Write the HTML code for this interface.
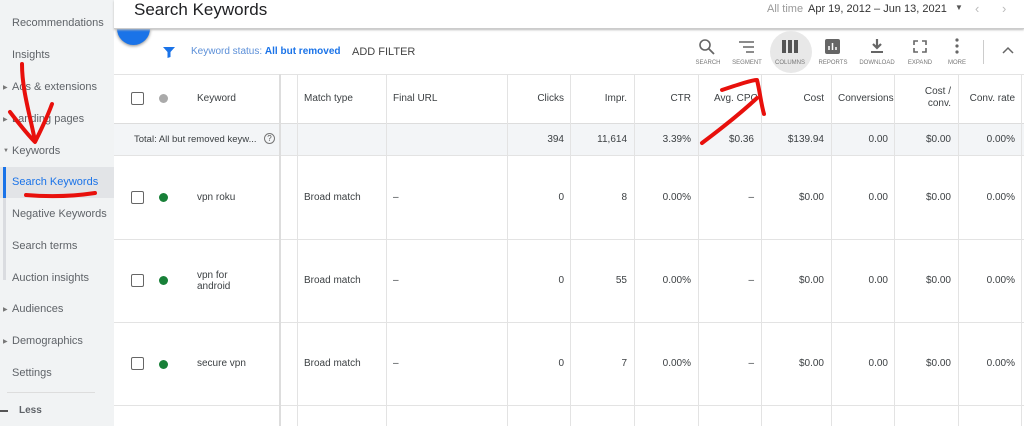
<!DOCTYPE html>
<html><head><style>
*{margin:0;padding:0;box-sizing:border-box}
body{width:1024px;height:426px;overflow:hidden;font-family:"Liberation Sans",sans-serif;background:#fff;position:relative;color:#3c4043}
.sb{position:absolute;left:0;top:0;width:114px;height:426px;background:#f1f3f4}
.sb div{position:absolute;left:12px;font-size:11px;color:#5f6368}
.tri{position:absolute;left:3px;font-size:6px;color:#777}
.hdr{position:absolute;left:114px;top:0;width:910px;height:29px;background:#fff;border-bottom:1px solid #ccc;box-shadow:0 1px 2px #bbb}
.a{position:absolute;white-space:nowrap}
.v{position:absolute;top:74px;bottom:0;width:1px;background:#e3e3e3}
.h{position:absolute;left:114px;right:0;height:1px;background:#e3e3e3}
.c{position:absolute;font-size:10px;color:#3c4043;white-space:nowrap}
.r{text-align:right}
.cb{position:absolute;left:131px;width:13px;height:13px;border:1.5px solid #666;border-radius:2px}
.dot{position:absolute;left:159px;width:9px;height:9px;border-radius:50%;background:#188038}
.ic{position:absolute;top:38px;font-size:6px;color:#777;text-align:center;width:40px}
</style></head><body>
<div class="sb">
<div style="top:17px">Recommendations</div>
<div style="top:49px">Insights</div>
<span class="tri" style="top:84px">▶</span><div style="top:81px">Ads &amp; extensions</div>
<span class="tri" style="top:116px">▶</span><div style="top:113px">Landing pages</div>
<span class="tri" style="top:148px">▼</span><div style="top:145px">Keywords</div>
<span style="position:absolute;left:0;top:167px;width:114px;height:31px;background:#e2e4e7"></span>
<span style="position:absolute;left:3px;top:167px;width:3px;height:31px;background:#1a73e8"></span>
<div style="top:176px;color:#1a73e8">Search Keywords</div>
<span style="position:absolute;left:3px;top:198px;width:3px;height:82px;background:#dadce0"></span>
<div style="top:208px">Negative Keywords</div>
<div style="top:240px">Search terms</div>
<div style="top:272px">Auction insights</div>
<span class="tri" style="top:306px">▶</span><div style="top:303px">Audiences</div>
<span class="tri" style="top:338px">▶</span><div style="top:335px">Demographics</div>
<div style="top:367px">Settings</div>
<span style="position:absolute;left:7px;top:392px;width:88px;height:1px;background:#ddd"></span>
<span style="position:absolute;left:0;top:410px;width:8px;height:1.5px;background:#555"></span>
<div style="top:405px;left:19px;font-weight:bold;font-size:10px">Less</div>
</div>
<div style="position:absolute;left:117px;top:12px;width:33px;height:33px;border-radius:50%;background:#1a73e8;box-shadow:0 1px 3px #888"></div>
<div class="hdr"></div>
<div class="a" style="left:134px;top:0px;font-size:17px;color:#202124">Search Keywords</div>
<div class="a" style="left:767px;top:3px;font-size:11px;color:#999">All time</div>
<div class="a" style="left:808px;top:3px;font-size:11px;color:#333">Apr 19, 2012 – Jun 13, 2021</div>
<div class="a" style="left:955px;top:3px;font-size:8px;color:#555">▼</div>
<div class="a" style="left:975px;top:1px;font-size:13px;color:#bbb">‹</div>
<div class="a" style="left:1002px;top:1px;font-size:13px;color:#bbb">›</div>
<svg class="a" style="left:162px;top:45px" width="14" height="14"><path d="M1 2h12L8.5 7v5l-3 1V7z" fill="#1a73e8"/></svg>
<div class="a" style="left:191px;top:46px;font-size:10px;color:#5b8fd8">Keyword status: <b style="color:#1a73e8">All but removed</b></div>
<div class="a" style="left:352px;top:46px;font-size:11px;color:#444">ADD FILTER</div>
<div style="position:absolute;left:770px;top:31px;width:42px;height:42px;border-radius:50%;background:#e8e8e8"></div>
<svg class="a" style="left:698px;top:38px" width="18" height="18"><circle cx="7" cy="7" r="5" fill="none" stroke="#666" stroke-width="1.6"/><path d="M11 11l5 5" stroke="#666" stroke-width="1.8"/></svg>
<svg class="a" style="left:738px;top:40px" width="18" height="14"><path d="M1 2h15M5 7h11M8 12h8" stroke="#666" stroke-width="1.5"/></svg>
<svg class="a" style="left:782px;top:40px" width="16" height="13"><rect x="0" y="0" width="4" height="13" fill="#555"/><rect x="6" y="0" width="4" height="13" fill="#555"/><rect x="12" y="0" width="4" height="13" fill="#555"/></svg>
<svg class="a" style="left:825px;top:39px" width="15" height="15"><rect width="15" height="15" rx="2" fill="#666"/><path d="M4 11V7M7.5 11V4M11 11V8" stroke="#fff" stroke-width="1.5"/></svg>
<svg class="a" style="left:870px;top:38px" width="14" height="16"><path d="M7 1v9M3 6l4 4 4-4" stroke="#666" stroke-width="2.2" fill="none"/><path d="M1 14h12" stroke="#666" stroke-width="2"/></svg>
<svg class="a" style="left:913px;top:40px" width="14" height="13"><path d="M1 5V1h4M9 1h4v4M13 8v4H9M5 12H1V8" stroke="#666" stroke-width="1.6" fill="none"/></svg>
<svg class="a" style="left:955px;top:38px" width="4" height="16"><circle cx="2" cy="2" r="1.6" fill="#666"/><circle cx="2" cy="8" r="1.6" fill="#666"/><circle cx="2" cy="14" r="1.6" fill="#666"/></svg>
<div class="ic" style="left:688px;top:60px">SEARCH</div>
<div class="ic" style="left:727px;top:60px">SEGMENT</div>
<div class="ic" style="left:770px;top:60px">COLUMNS</div>
<div class="ic" style="left:813px;top:60px">REPORTS</div>
<div class="ic" style="left:857px;top:60px">DOWNLOAD</div>
<div class="ic" style="left:900px;top:60px">EXPAND</div>
<div class="ic" style="left:937px;top:60px">MORE</div>
<div style="position:absolute;left:983px;top:40px;width:1px;height:24px;background:#ccc"></div>
<svg class="a" style="left:1002px;top:46px" width="12" height="8"><path d="M1 7l5-5 5 5" stroke="#666" stroke-width="1.5" fill="none"/></svg>
<div class="h" style="top:74px"></div>
<div style="position:absolute;left:114px;right:0;top:123px;height:33px;background:#f3f5f7;border-top:1px solid #ddd;border-bottom:1px solid #e3e3e3"></div>
<div class="h" style="top:239px"></div><div class="h" style="top:322px"></div><div class="h" style="top:405px"></div>
<div class="v" style="left:279px;width:2px;background:#ddd"></div>
<div class="v" style="left:297px"></div><div class="v" style="left:386px"></div><div class="v" style="left:507px"></div>
<div class="v" style="left:570px"></div><div class="v" style="left:634px"></div><div class="v" style="left:698px"></div>
<div class="v" style="left:761px"></div><div class="v" style="left:831px"></div><div class="v" style="left:894px"></div>
<div class="v" style="left:958px"></div><div class="v" style="left:1021px"></div>
<div class="cb" style="top:92px"></div><div class="dot" style="top:94px;background:#aaa"></div>
<div class="c" style="left:197px;top:93px">Keyword</div>
<div class="c" style="left:304px;top:93px">Match type</div>
<div class="c" style="left:393px;top:93px">Final URL</div>
<div class="c r" style="left:507px;width:57px;top:93px">Clicks</div>
<div class="c r" style="left:570px;width:57px;top:93px">Impr.</div>
<div class="c r" style="left:634px;width:57px;top:93px">CTR</div>
<div class="c" style="left:714px;top:93px">Avg. CPC</div>
<div class="c r" style="left:761px;width:63px;top:93px">Cost</div>
<div class="c" style="left:838px;top:93px">Conversions</div>
<div class="c r" style="left:894px;width:57px;top:86px;line-height:12px">Cost /<br>conv.</div>
<div class="c r" style="left:958px;width:57px;top:93px">Conv. rate</div>
<div class="c" style="left:134px;top:134px;font-size:9.5px">Total: All but removed keyw...</div>
<div class="a" style="left:264px;top:133px;width:11px;height:11px;border:1px solid #777;border-radius:50%;font-size:8px;text-align:center;line-height:9px;color:#555">?</div>
<div class="c r" style="left:507px;width:57px;top:134px">394</div>
<div class="c r" style="left:570px;width:57px;top:134px">11,614</div>
<div class="c r" style="left:634px;width:57px;top:134px">3.39%</div>
<div class="c r" style="left:698px;width:56px;top:134px">$0.36</div>
<div class="c r" style="left:761px;width:63px;top:134px">$139.94</div>
<div class="c r" style="left:831px;width:57px;top:134px">0.00</div>
<div class="c r" style="left:894px;width:57px;top:134px">$0.00</div>
<div class="c r" style="left:958px;width:57px;top:134px">0.00%</div>

<div class="cb" style="top:191px"></div><div class="dot" style="top:193px"></div>
<div class="c" style="left:197px;top:192px">vpn roku</div>
<div class="c" style="left:304px;top:192px">Broad match</div><div class="c" style="left:393px;top:192px">–</div>
<div class="c r" style="left:507px;width:57px;top:192px">0</div><div class="c r" style="left:570px;width:57px;top:192px">8</div>
<div class="c r" style="left:634px;width:57px;top:192px">0.00%</div><div class="c r" style="left:698px;width:56px;top:192px">–</div>
<div class="c r" style="left:761px;width:63px;top:192px">$0.00</div><div class="c r" style="left:831px;width:57px;top:192px">0.00</div>
<div class="c r" style="left:894px;width:57px;top:192px">$0.00</div><div class="c r" style="left:958px;width:57px;top:192px">0.00%</div>

<div class="cb" style="top:274px"></div><div class="dot" style="top:276px"></div>
<div class="c" style="left:197px;top:270px;line-height:11px">vpn for<br>android</div>
<div class="c" style="left:304px;top:275px">Broad match</div><div class="c" style="left:393px;top:275px">–</div>
<div class="c r" style="left:507px;width:57px;top:275px">0</div><div class="c r" style="left:570px;width:57px;top:275px">55</div>
<div class="c r" style="left:634px;width:57px;top:275px">0.00%</div><div class="c r" style="left:698px;width:56px;top:275px">–</div>
<div class="c r" style="left:761px;width:63px;top:275px">$0.00</div><div class="c r" style="left:831px;width:57px;top:275px">0.00</div>
<div class="c r" style="left:894px;width:57px;top:275px">$0.00</div><div class="c r" style="left:958px;width:57px;top:275px">0.00%</div>

<div class="cb" style="top:357px"></div><div class="dot" style="top:360px"></div>
<div class="c" style="left:197px;top:358px">secure vpn</div>
<div class="c" style="left:304px;top:358px">Broad match</div><div class="c" style="left:393px;top:358px">–</div>
<div class="c r" style="left:507px;width:57px;top:358px">0</div><div class="c r" style="left:570px;width:57px;top:358px">7</div>
<div class="c r" style="left:634px;width:57px;top:358px">0.00%</div><div class="c r" style="left:698px;width:56px;top:358px">–</div>
<div class="c r" style="left:761px;width:63px;top:358px">$0.00</div><div class="c r" style="left:831px;width:57px;top:358px">0.00</div>
<div class="c r" style="left:894px;width:57px;top:358px">$0.00</div><div class="c r" style="left:958px;width:57px;top:358px">0.00%</div>

<svg class="a" style="left:0;top:0" width="1024" height="426">
<g stroke="#e8100c" stroke-width="4" fill="none" stroke-linecap="round" stroke-linejoin="round">
<path d="M22 64C22 90 30 115 35 141"/>
<path d="M10 112C20 125 28 135 35 142C42 128 48 115 52 104"/>
<path d="M26 195C50 197 75 196 95 193"/>
<path d="M702 143C722 128 742 112 757 98"/>
<path d="M722 90C740 84 752 80 757 80C760 92 761 104 764 114"/>
</g></svg>
</body></html>
